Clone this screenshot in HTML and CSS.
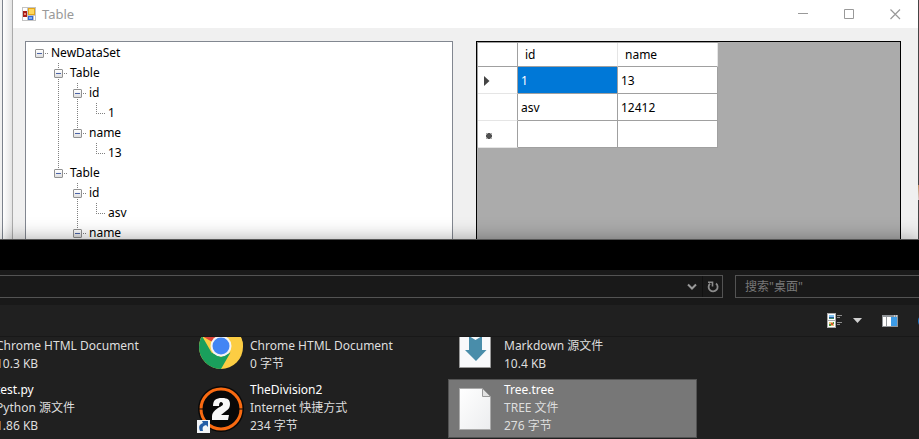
FILE: index.html
```html
<!DOCTYPE html>
<html lang="zh-CN">
<head>
<meta charset="utf-8">
<title>Table</title>
<link rel="stylesheet" href="styles.css">
</head>
<body>
<div class="desktop">
  <div class="backdrop">
    <div class="edge-left"></div>
    <main class="window">
      <header class="titlebar">
        <svg class="app-icon" width="14" height="14" viewBox="0 0 14 14" aria-hidden="true">
          <rect width="14" height="14" fill="#c3c3c3"/>
          <path d="M1 1h4v3H1zM1 10h4v3H1zM12 9h1v4h-1z" fill="#fff"/>
          <rect x="1" y="4" width="4" height="6" fill="#a91f17"/>
          <rect x="2" y="6" width="2" height="2" fill="#e88a80"/>
          <rect x="6" y="1" width="7" height="7" fill="#e2a51b"/>
          <rect x="7" y="2" width="5" height="5" fill="#ffd75c"/>
          <rect x="6" y="9" width="5" height="4" fill="#3568d4"/>
          <rect x="7" y="10" width="3" height="2" fill="#7fb0f5"/>
        </svg>
        <h1 class="title">Table</h1>
        <button class="caption" aria-label="最小化"><svg width="11" height="11" viewBox="0 0 11 11"><path d="M0 4.500h10" stroke="#999"/></svg></button>
        <button class="caption" aria-label="最大化"><svg width="11" height="11" viewBox="0 0 11 11"><path d="M.5 .5h9v9h-9z" fill="none" stroke="#999"/></svg></button>
        <button class="caption" aria-label="关闭"><svg width="11" height="11" viewBox="0 0 11 11"><path d="M.5 .5l9.500 9.500M10 .5l-9.500 9.500" stroke="#999" stroke-width="1.200"/></svg></button>
      </header>
      <div class="client">
        <ul class="tree">
          <li class="node"><span class="cell"><button class="toggle" aria-label="折叠 NewDataSet"></button></span>NewDataSet</li>
          <li class="node"><span class="cell blank"></span><span class="cell up down"><button class="toggle" aria-label="折叠 Table"></button></span>Table</li>
          <li class="node"><span class="cell blank"></span><span class="cell line"></span><span class="cell up down"><button class="toggle" aria-label="折叠 id"></button></span>id</li>
          <li class="node"><span class="cell blank"></span><span class="cell line"></span><span class="cell line"></span><span class="cell elbow"></span>1</li>
          <li class="node"><span class="cell blank"></span><span class="cell line"></span><span class="cell up"><button class="toggle" aria-label="折叠 name"></button></span>name</li>
          <li class="node"><span class="cell blank"></span><span class="cell line"></span><span class="cell blank"></span><span class="cell elbow"></span>13</li>
          <li class="node"><span class="cell blank"></span><span class="cell up"><button class="toggle" aria-label="折叠 Table"></button></span>Table</li>
          <li class="node"><span class="cell blank"></span><span class="cell blank"></span><span class="cell up down"><button class="toggle" aria-label="折叠 id"></button></span>id</li>
          <li class="node"><span class="cell blank"></span><span class="cell blank"></span><span class="cell line"></span><span class="cell elbow"></span>asv</li>
          <li class="node"><span class="cell blank"></span><span class="cell blank"></span><span class="cell up"><button class="toggle" aria-label="折叠 name"></button></span>name</li>
        </ul>
        <div class="grid-panel">
          <table class="data-grid">
            <thead>
              <tr><td class="row-head"></td><th>id</th><th>name</th></tr>
            </thead>
            <tbody>
              <tr><td class="row-head"><svg width="6" height="10" viewBox="0 0 6 10" aria-hidden="true"><path d="M0 0l5.500 5L0 10z" fill="#444"/></svg></td><td class="selected">1</td><td>13</td></tr>
              <tr><td class="row-head"></td><td>asv</td><td>12412</td></tr>
              <tr><td class="row-head new-row"><svg width="6" height="6" viewBox="0 0 6 6" aria-hidden="true"><path d="M0 0h6v6H0z" fill="#aaa"/><path d="M1 1h4v4H1zM2 0h2v6H2zM0 2h6v2H0z" fill="#505050"/></svg></td><td></td><td></td></tr>
            </tbody>
          </table>
        </div>
      </div>
    </main>
    <div class="edge-right"></div>
  </div>

  <section class="explorer">
    <div class="explorer-title"></div>
    <div class="address-row">
      <div class="address">
        <button class="address-button" aria-label="上一个位置"><svg width="10" height="8" viewBox="0 0 10 8"><path d="M1 1.500l4 4 4-4" fill="none" stroke="#999" stroke-width="2"/></svg></button>
        <button class="address-button refresh" aria-label="刷新"><svg width="12" height="12" viewBox="0 0 12 12"><path d="M9 2.500A4.500 4.500 0 1 1 3 2.700" fill="none" stroke="#8c8c8c" stroke-width="1.800"/><path d="M1 1.200h4.500v4.300" fill="none" stroke="#8c8c8c" stroke-width="1.600"/></svg></button>
      </div>
      <div class="search">
        <input class="search-input" type="search" aria-label="搜索" placeholder='搜索"桌面"'>
        <svg width="12" height="12" viewBox="0 0 12 12" aria-hidden="true"><circle cx="7.500" cy="4.500" r="3.500" fill="none" stroke="#aaa" stroke-width="1.500"/><path d="M5 7L.5 11.500" stroke="#aaa" stroke-width="2"/></svg>
      </div>
    </div>
    <div class="toolbar">
      <button class="tool" aria-label="更改视图"><svg width="16" height="16" viewBox="0 0 16 16">
        <path d="M0 0h9v15H0z" fill="#aaa"/><path d="M1 1h7v6H1zM1 8h7v6H1z" fill="#fff"/>
        <path d="M2 2h5v2H2z" fill="#7fc2f2"/><path d="M2 4h5v1H2z" fill="#2a5a9c"/><path d="M2 5h5v1H2z" fill="#3f8b6a"/>
        <path d="M2 9h5v4H2z" fill="#e5c07a"/><path d="M2 11h2v2H2zM6 9h1v2H6z" fill="#4c9b45"/><path d="M4 10h2v2H4z" fill="#d8572a"/>
        <path d="M10 2.500h5M10 4.500h3M10 9.500h5M10 11.500h3" stroke="#8d8d8d"/></svg></button>
      <button class="tool" aria-label="更多选项"><svg width="9" height="5" viewBox="0 0 9 5"><path d="M0 0h9L4.500 5z" fill="#d0d0d0"/></svg></button>
      <button class="tool pane" aria-label="显示预览窗格"><svg width="16" height="12" viewBox="0 0 16 12">
        <path d="M0 0h16v12H0z" fill="#909498"/><path d="M1 2h3v9H1zM5 2h4v9H5z" fill="#fff"/><path d="M9 2h6v9H9z" fill="#3c9be6"/><path d="M12 1h1M14 1h1" stroke="#fff"/></svg></button>
      <button class="tool help" aria-label="帮助"><svg width="14" height="14" viewBox="0 0 14 14"><circle cx="7" cy="7" r="7" fill="#1673c5"/></svg></button>
    </div>
    <div class="files">
      <ul class="file-grid">
        <li class="file"><span class="thumb"></span><div class="info"><p>Chrome HTML Document</p><p>10.3 KB</p></div></li>
        <li class="file">
          <svg class="thumb" viewBox="0 0 48 48" aria-hidden="true">
            <circle cx="24" cy="24" r="22" fill="#fccd43"/>
            <path d="M24 24L5 13A22 22 0 0 1 43 13H24z" fill="#dc4437"/>
            <path d="M5 13A22 22 0 0 0 24 46L33.500 29.500 24 34 14.500 29.500z" fill="#1a9f5c"/>
            <path d="M24 14h20a22 22 0 0 1 2 10H24z" fill="#fccd43"/>
            <circle cx="24" cy="23" r="10.500" fill="#f4f4f4"/><circle cx="24" cy="23" r="8.500" fill="#4285f4"/>
          </svg>
          <div class="info"><p>Chrome HTML Document</p><p>0 字节</p></div></li>
        <li class="file">
          <svg class="thumb" viewBox="0 0 48 48" aria-hidden="true">
            <path d="M8.500 2.500h31v42h-31z" fill="#f8f9fb" stroke="#999"/>
            <path d="M18 13l6.500 4L31 13v14h4.500L25 38 14 27h4z" fill="#498daa"/>
          </svg>
          <div class="info"><p>Markdown 源文件</p><p>10.4 KB</p></div></li>
        <li class="file"><span class="thumb"></span><div class="info"><p class="name">test.py</p><p>Python 源文件</p><p>1.86 KB</p></div></li>
        <li class="file">
          <svg class="thumb" viewBox="0 0 48 48" aria-hidden="true">
            <circle cx="24" cy="24" r="23" fill="#080808"/>
            <circle cx="24" cy="24" r="20" fill="none" stroke="#f96a11" stroke-width="3"/>
            <path d="M2 24h5M41 24h5" stroke="#080808"/>
            <path d="M16 21c0-6 3-8 9-8s8 2 8 6c0 3-1 5-4 7l-5 4h8l-1 5H15v-4c0-3 2-5 6-8 4-2 5-3 5-4s-1-2-2-2-2 1-2 4z" fill="#f8f8f8"/>
            <path d="M0 35h13v13H0z" fill="#f2f4f6"/>
            <path d="M3 46c-2-5 0-7 3-8l-1-2h6v6l-2-2c-3 1-4 2-3 6z" fill="#245da5"/>
          </svg>
          <div class="info"><p class="name">TheDivision2</p><p>Internet 快捷方式</p><p>234 字节</p></div></li>
        <li class="file picked">
          <svg class="thumb" viewBox="0 0 48 48" aria-hidden="true">
            <defs><linearGradient id="paper" x2="1" y2="1"><stop stop-color="#fff"/><stop offset="1" stop-color="#ecedef"/></linearGradient></defs>
            <path d="M8.500 3.500h23l8 8v33h-31z" fill="url(#paper)" stroke="#aaa"/>
            <path d="M31.500 3.500v8h8z" fill="#e2e2e2" stroke="#999"/>
          </svg>
          <div class="info"><p class="name">Tree.tree</p><p>TREE 文件</p><p>276 字节</p></div></li>
      </ul>
    </div>
  </section>
</div>
</body>
</html>
```
FILE: styles.css
```css
* {
  box-sizing: border-box;
}

body {
  margin: 0;
  background: #202020;
  color: #000;
  font-family: "Noto Sans", "Noto Sans CJK SC", sans-serif;
  font-size: 12px;
  line-height: 18px;
}

ul,
p,
h1 {
  margin: 0;
  padding: 0;
  list-style: none;
}

button {
  display: flex;
  align-items: center;
  justify-content: center;
  margin: 0;
  padding: 0;
  border: 0;
  background: none;
}

.desktop {
  display: flex;
  flex-direction: column;
  min-height: 100vh;
  overflow: hidden;
}

.backdrop {
  display: flex;
  height: 239px;
}

.edge-left {
  flex: 0 0 13px;
  background: linear-gradient(90deg, #f0f0f0 2px, #7c828c 2px, #7c828c 3px, #fff 3px, #e4e4e4 12px, #aaa 12px);
}

.edge-right {
  flex: 0 0 1px;
  background: linear-gradient(#444 185px, #b9885c 185px, #dcc 200px, #444 200px);
}

.window {
  display: flex;
  flex: 1;
  flex-direction: column;
  min-width: 0;
  background: #f0f0f0;
}

.titlebar {
  display: flex;
  flex: 0 0 28px;
  align-items: center;
  padding-left: 9px;
  background: #fff;
}

.app-icon {
  flex: none;
}

.title {
  flex: 1;
  margin-left: 6px;
  color: #999;
  font-size: 13px;
  font-weight: 400;
}

.caption {
  width: 46px;
  height: 24px;
}

.client {
  display: grid;
  flex: 1;
  grid-template-columns: 428fr 425fr;
  gap: 23px;
  min-height: 0;
  padding: 13px 17px 0 12px;
}

.tree {
  min-width: 0;
  min-height: 0;
  padding: 1px 4px;
  overflow: hidden;
  border: 1px solid #828790;
  border-bottom: 0;
  background: #fff;
}

.node {
  display: flex;
  height: 20px;
  line-height: 20px;
}

.cell {
  --dots: repeating-linear-gradient(#808080 0 1px, transparent 1px 2px);
  --dash: repeating-linear-gradient(90deg, #808080 0 1px, transparent 1px 2px);
  flex: 0 0 19px;
  padding: 6px 0 0 5px;
  background: var(--dash) 15px 10px / 4px 1px no-repeat;
}

.cell:last-of-type {
  margin-right: 2px;
}

.cell.blank {
  background: none;
}

.cell.line {
  background: var(--dots) 9px 0 / 1px 20px no-repeat;
}

.cell.up {
  background: var(--dash) 15px 10px / 4px 1px no-repeat, var(--dots) 9px 0 / 1px 6px no-repeat;
}

.cell.up.down {
  background: var(--dash) 15px 10px / 4px 1px no-repeat, var(--dots) 9px 0 / 1px 20px no-repeat;
}

.cell.elbow {
  background: var(--dots) 9px 0 / 1px 10px no-repeat, var(--dash) 9px 10px / 9px 1px no-repeat;
}

.toggle {
  width: 9px;
  height: 9px;
  border: 1px solid #919191;
  border-radius: 1px;
  background: linear-gradient(#4b63a7, #4b63a7) center / 5px 1px no-repeat, linear-gradient(#fff, #dedede);
}

.grid-panel {
  min-width: 0;
  overflow: hidden;
  border: 1px solid #000;
  border-bottom: 0;
  background: #ababab;
}

.data-grid {
  width: 241px;
  border-top: 1px solid #a0a0a0;
  border-left: 1px solid #a0a0a0;
  border-spacing: 0;
  table-layout: fixed;
}

.data-grid th,
.data-grid td {
  width: 100px;
  height: 27px;
  padding: 2px 3px 0;
  border-right: 1px solid #a0a0a0;
  border-bottom: 1px solid #a0a0a0;
  background: #fff;
  text-align: left;
}

.data-grid th,
.data-grid thead td {
  height: 24px;
  padding: 0 7px;
  border-right-color: #e5e5e5;
  font-weight: 400;
}

.data-grid .row-head {
  width: 40px;
  padding: 2px 6px 0;
  border-right-color: #a0a0a0;
}

.data-grid tbody .row-head {
  border-bottom-color: #e5e5e5;
}

.data-grid .new-row {
  padding: 4px 8px 0;
}

.data-grid svg {
  display: block;
}

.data-grid .selected {
  background: #0078d7;
  color: #fff;
}

.explorer {
  position: relative;
  display: flex;
  flex: 1;
  flex-direction: column;
  border-top: 1px solid #555;
  background: #202020;
  box-shadow: 0 0 18px rgba(0, 0, 0, 0.35);
  color: #dedede;
}

.explorer-title {
  height: 30px;
  background: #000;
}

.address-row {
  display: flex;
  gap: 12px;
  height: 35px;
  padding: 5px 0 7px;
  background: #191919;
}

.address,
.search {
  display: flex;
  align-items: center;
  border: 1px solid #535353;
}

.address {
  flex: 1;
  justify-content: flex-end;
  border-left: 0;
}

.address-button {
  width: 20px;
  height: 21px;
}

.refresh {
  border-left: 1px solid #111;
}

.search {
  flex: 0 0 196px;
  margin-right: -12px;
  padding-left: 9px;
}

.address-row {
  margin-right: -1px;
}

.search-input {
  flex: 1;
  min-width: 0;
  padding: 0;
  border: 0;
  outline: 0;
  background: none;
  color: #dedede;
  font: inherit;
}

.search-input::placeholder {
  color: #777;
}

.toolbar {
  display: flex;
  align-items: center;
  justify-content: flex-end;
  height: 32px;
  margin-right: -13px;
  border-bottom: 1px solid #181818;
}

.tool {
  margin-left: 10px;
}

.pane,
.help {
  margin-left: 20px;
}

.files {
  flex: 1;
  overflow: hidden;
}

/* The list is scrolled part-way into its first row and column. */
.file-grid {
  display: grid;
  grid-template-columns: repeat(3, 249px);
  gap: 3px 5px;
  margin: -20px 0 0 -60px;
}

.file {
  display: flex;
  align-items: center;
  gap: 5px;
  height: 59px;
  padding: 0 2px;
  border: 1px solid transparent;
}

.picked {
  border-color: #535353;
  background: #777;
}

.thumb {
  flex: none;
  width: 48px;
  height: 48px;
}

.info {
  align-self: flex-end;
  padding-bottom: 2px;
  white-space: nowrap;
}

.info p {
  height: 18px;
}

.name {
  color: #fff;
}
```
